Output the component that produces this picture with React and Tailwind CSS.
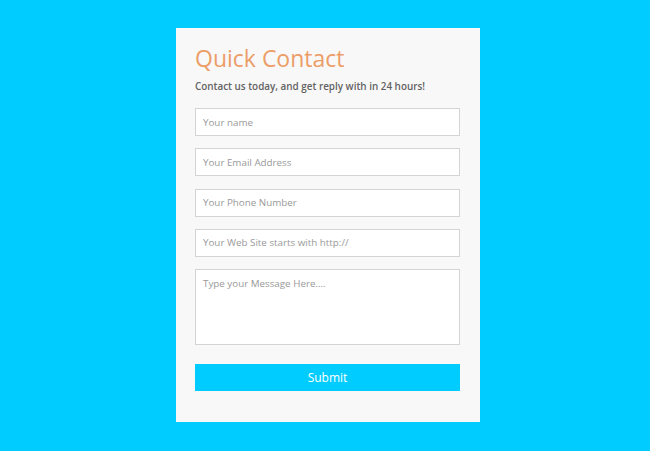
export default function App() {
  const fields = [
    'Your name',
    'Your Email Address',
    'Your Phone Number',
    'Your Web Site starts with http://',
  ];

  return (
    <div className="w-[650px] h-[451px] bg-[#00ccff] pt-[28px]" style={{ fontFamily: '"Open Sans", sans-serif' }}>
      <div className="ml-[176px] w-[304px] h-[394px] bg-[#f8f8f8] pl-[19px] pr-[20px] pt-[15px]">
        <h1 className="text-[23px] leading-[30px] text-[#ec9d68] font-normal">Quick Contact</h1>
        <p className="mt-[5px] text-[9.9px] leading-[16px] font-semibold text-[#636363]">
          Contact us today, and get reply with in 24 hours!
        </p>
        <form className="mt-[14px] flex flex-col gap-[12.3px]">
          {fields.map((f) => (
            <input
              key={f}
              placeholder={f}
              className="h-[28px] w-full bg-white border border-[#d4d4d4] px-[7px] text-[9.8px] text-[#555] placeholder:text-[#999] outline-none"
            />
          ))}
          <textarea
            placeholder="Type your Message Here...."
            className="h-[76px] w-full bg-white border border-[#d4d4d4] px-[7px] pt-[7px] text-[9.8px] text-[#555] placeholder:text-[#999] outline-none resize-none"
          />
          <button
            type="button"
            className="mt-[7px] h-[27px] w-full bg-[#00ccff] text-white text-[12px]"
          >
            Submit
          </button>
        </form>
      </div>
    </div>
  );
}
